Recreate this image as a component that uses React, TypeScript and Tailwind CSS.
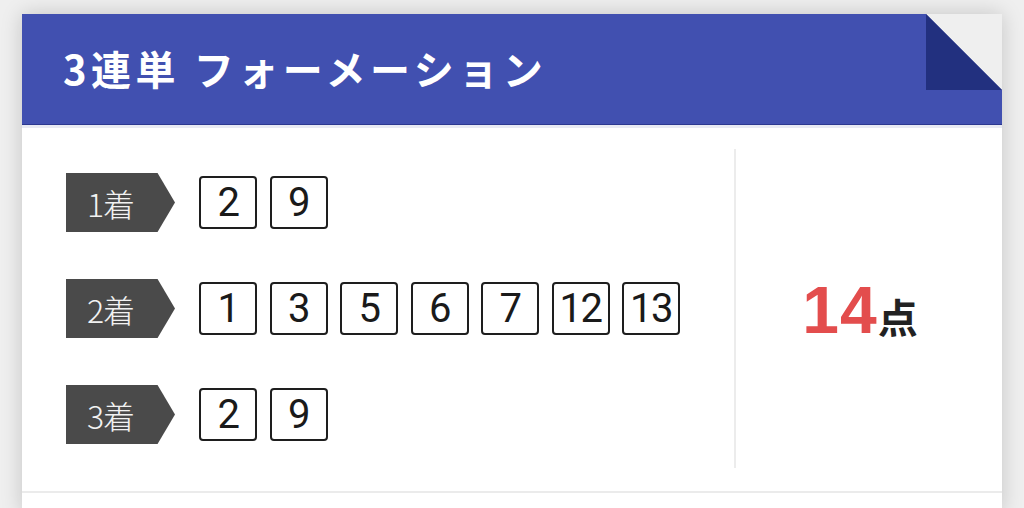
import React from "react";

const rows: { label: string; nums: string[] }[] = [
  { label: "1着", nums: ["2", "9"] },
  { label: "2着", nums: ["1", "3", "5", "6", "7", "12", "13"] },
  { label: "3着", nums: ["2", "9"] },
];

function PlaceLabel({ text }: { text: string }) {
  return (
    <div
      className="flex h-[59px] w-[109px] shrink-0 items-center bg-[#4a4a4a] pl-[21px] text-[32px] font-light leading-none text-[#f2f2f2]"
      style={{ clipPath: "polygon(0 0, 84% 0, 100% 50%, 84% 100%, 0 100%)" }}
    >
      <span className="font-['Noto_Sans_CJK_JP',sans-serif] tracking-[-1px]">{text}</span>
    </div>
  );
}

function NumBox({ n }: { n: string }) {
  return (
    <div className="flex h-[53px] w-[58px] items-center justify-center rounded-[4px] border-2 border-[#1e1e1e] bg-white font-['Roboto',sans-serif] text-[40px] font-normal leading-none text-[#1a1a1a] tracking-[-1.5px]">
      {n}
    </div>
  );
}

export default function App() {
  return (
    <div className="h-[508px] w-[1024px] overflow-hidden bg-[#efefef] pl-[22px] pt-[14px]">
      <div className="w-[980px] bg-white shadow-[0_0_20px_rgba(0,0,0,0.18)]">
        {/* title bar with folded corner */}
        <div className="relative flex h-[111px] items-center border-b border-[#2c3890] bg-[#4150b0] pl-[41px]">
          <h1 className="pb-[2px] font-['Noto_Sans_CJK_JP',sans-serif] text-[40px] font-bold leading-none tracking-[4.5px] text-white">
            3連単 フォーメーション
          </h1>
          <svg
            className="absolute right-0 top-0"
            width="76"
            height="76"
            viewBox="0 0 76 76"
          >
            <polygon points="0,0 76,0 76,76" fill="#efefef" />
            <polygon points="0,0 76,76 0,76" fill="#22307f" />
          </svg>
        </div>
        <div className="h-[3px] bg-[#e8eaf3]" />

        {/* body */}
        <div className="flex border-b-2 border-[#ebebeb] pb-[23px] pt-[21px]">
          <div className="flex w-[714px] flex-col justify-center gap-[47px] border-r-2 border-[#ececec] py-[24px] pl-[44px]">
            {rows.map((r) => (
              <div key={r.label} className="flex items-center gap-[24px]">
                <PlaceLabel text={r.label} />
                <div className="flex gap-[12.5px]">
                  {r.nums.map((n, i) => (
                    <NumBox key={i} n={n} />
                  ))}
                </div>
              </div>
            ))}
          </div>
          <div className="flex flex-1 items-center justify-center pr-[18px] pt-[2px]">
            <div className="flex items-baseline">
              <span className="font-['Liberation_Sans',sans-serif] text-[66px] font-bold leading-none tracking-[1px] text-[#e34d4d]">
                14
              </span>
              <span className="font-['Noto_Sans_CJK_JP',sans-serif] text-[40px] font-bold leading-none text-[#222]">
                点
              </span>
            </div>
          </div>
        </div>
        <div className="h-[20px]" />
      </div>
    </div>
  );
}
